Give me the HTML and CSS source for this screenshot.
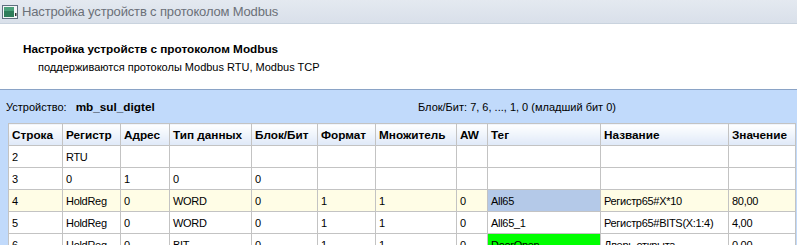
FILE: index.html
```html
<!DOCTYPE html>
<html lang="ru">
<head>
<meta charset="utf-8">
<link rel="stylesheet" href="styles.css">
</head>
<body>
<div class="window">
  <div class="titlebar">
    <svg class="appicon" width="16" height="14" viewBox="0 0 16 14">
      <rect x="0.5" y="0.5" width="15" height="13" fill="#f4f6f8" stroke="#5f6f7f"/>
      <rect x="2" y="2" width="10" height="10" fill="#2e7d5a"/>
      <rect x="2" y="2" width="10" height="4" fill="#4aa07a"/>
      <rect x="13" y="8" width="1.5" height="3" fill="#333"/>
    </svg>
    <span class="title">Настройка устройств с протоколом Modbus</span>
  </div>
  <div class="intro">
    <div class="intro-title">Настройка устройств с протоколом Modbus</div>
    <div class="intro-sub">поддерживаются протоколы Modbus RTU, Modbus TCP</div>
  </div>
  <div class="panel">
    <div class="devline">
      <div class="dev">Устройство: <b>mb_sul_digtel</b></div>
      <div class="bits">Блок/Бит: 7, 6, ..., 1, 0 (младший бит 0)</div>
    </div>
    <table class="grid">
      <colgroup>
        <col style="width:54px"><col style="width:58px"><col style="width:49px"><col style="width:82px"><col style="width:66px"><col style="width:58px"><col style="width:81px"><col style="width:31px"><col style="width:113px"><col style="width:128px"><col style="width:67px">
      </colgroup>
      <thead>
        <tr><th>Строка</th><th>Регистр</th><th>Адрес</th><th>Тип данных</th><th>Блок/Бит</th><th>Формат</th><th>Множитель</th><th>AW</th><th>Тег</th><th>Название</th><th>Значение</th></tr>
      </thead>
      <tbody>
        <tr><td>2</td><td>RTU</td><td></td><td></td><td></td><td></td><td></td><td></td><td></td><td></td><td></td></tr>
        <tr><td>3</td><td>0</td><td>1</td><td>0</td><td>0</td><td></td><td></td><td></td><td></td><td></td><td></td></tr>
        <tr class="sel"><td>4</td><td>HoldReg</td><td>0</td><td>WORD</td><td>0</td><td>1</td><td>1</td><td>0</td><td class="tag-blue">All65</td><td>Регистр65#X*10</td><td>80,00</td></tr>
        <tr><td>5</td><td>HoldReg</td><td>0</td><td>WORD</td><td>0</td><td>1</td><td>1</td><td>0</td><td>All65_1</td><td>Регистр65#BITS(X:1:4)</td><td>4,00</td></tr>
        <tr><td>6</td><td>HoldReg</td><td>0</td><td>BIT</td><td>0</td><td>1</td><td>1</td><td>0</td><td class="tag-green">DoorOpen</td><td>Дверь открыта</td><td>0,00</td></tr>
      </tbody>
    </table>
  </div>
</div>
</body>
</html>
```
FILE: styles.css
```css
html, body {
  margin: 0;
  padding: 0;
  background: #ffffff;
  overflow: hidden;
}
body {
  font-family: "Liberation Sans", Arial, sans-serif;
  font-size: 11px;
  color: #000;
  width: 797px;
  height: 245px;
}
.window {
  display: flex;
  flex-direction: column;
  height: 245px;
}
.titlebar {
  flex: none;
  height: 23px;
  border-bottom: 1px solid #c9d3de;
  background: linear-gradient(#e4e9f0, #d9e0ea);
  display: flex;
  align-items: center;
  padding-left: 2px;
  gap: 4px;
}
.appicon { flex: none; }
.title {
  font-family: "Liberation Sans", sans-serif;
  font-size: 13px;
  letter-spacing: -0.15px;
  color: #6b7078;
}
.intro {
  flex: none;
  height: 65px;
  background: #fff;
  padding-left: 23px;
  box-sizing: border-box;
  padding-top: 16px;
}
.intro-title {
  font-weight: bold;
  font-size: 11.75px;
  height: 18px;
  line-height: 18px;
}
.intro-sub {
  padding-left: 15px;
  line-height: 18px;
}
.panel {
  flex: 1;
  background: #c1dafb;
  border-top: 1px solid #8aa3c6;
}
.devline {
  display: flex;
  height: 33px;
  align-items: center;
  padding-left: 6px;
}
.dev { width: 412px; }
.dev b { margin-left: 6px; font-size: 11.75px; }
.grid {
  margin-left: 8px;
  border-collapse: collapse;
  table-layout: fixed;
  background: #fff;
  border-top: 1px solid #8d9db3;
  border-left: 1px solid #8d9db3;
}
.grid th, .grid td {
  border: 1px solid #c3c3c3;
  height: 22px;
  padding: 0 0 0 3px;
  text-align: left;
  white-space: nowrap;
  overflow: hidden;
  box-sizing: border-box;
}
.grid td { letter-spacing: -0.3px; }
.grid th {
  font-weight: bold;
  font-size: 11.75px;
  background: linear-gradient(#ffffff, #dfe9f8);
}
.grid tr.sel td { background: #fffde6; }
.grid tr.sel td.tag-blue { background: #b4c9e8; }
.grid td.tag-green { background: #00ff00; }
```
